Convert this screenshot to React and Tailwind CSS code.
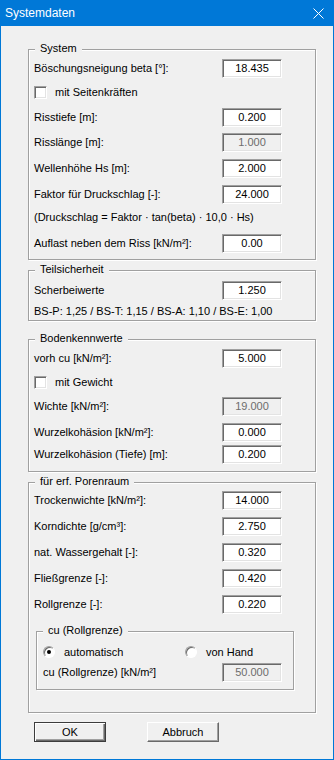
import React from "react";

const sunken =
  "border border-t-[#a0a0a0] border-l-[#a0a0a0] border-r-white border-b-white shadow-[inset_1px_1px_0_#696969,inset_-1px_-1px_0_#e3e3e3]";

function Field({ value, disabled }) {
  return (
    <div
      className={`w-[60px] h-[19px] flex items-center justify-center leading-none ${sunken} ${
        disabled ? "bg-[#f0f0f0] text-[#6d6d6d]" : "bg-white text-black"
      }`}
    >
      {value}
    </div>
  );
}

function Row({ label, value, disabled, className = "" }) {
  return (
    <div className={`flex items-center justify-between h-[19px] ${className}`}>
      <span className="leading-none">{label}</span>
      <Field value={value} disabled={disabled} />
    </div>
  );
}

function Check({ label, className = "" }) {
  return (
    <div className={`flex items-center h-[13px] gap-[8px] ${className}`}>
      <div className={`w-[13px] h-[13px] bg-white ${sunken}`} />
      <span className="leading-none">{label}</span>
    </div>
  );
}

function Radio({ checked }) {
  return (
    <div className="w-[12px] h-[12px] rounded-full border border-t-[#a0a0a0] border-l-[#a0a0a0] border-r-white border-b-white bg-white flex items-center justify-center shadow-[inset_1px_1px_0_#696969]">
      {checked && <div className="w-[4px] h-[4px] rounded-full bg-black" />}
    </div>
  );
}

function Group({ title, className = "", children }) {
  return (
    <div
      className={`relative border border-[#a0a0a0] shadow-[inset_1px_1px_0_#fff,1px_1px_0_#fff] ${className}`}
    >
      <span className="absolute -top-[9px] left-[6px] bg-[#f0f0f0] px-[5px] leading-[14px]">
        {title}
      </span>
      {children}
    </div>
  );
}

function Button({ label, isDefault }) {
  return (
    <div
      className={`w-[72px] h-[20px] flex items-center justify-center leading-none bg-[#f0f0f0] ${
        isDefault
          ? "border border-[#3c3c3c] shadow-[inset_1px_1px_0_#fff,inset_-1px_-1px_0_#696969,inset_-2px_-2px_0_#a0a0a0]"
          : "border border-t-white border-l-white border-r-[#696969] border-b-[#696969] shadow-[inset_-1px_-1px_0_#a0a0a0]"
      }`}
    >
      {label}
    </div>
  );
}

export default function App() {
  return (
    <div className="w-[334px] h-[760px] bg-[#f0f0f0] border border-t-0 border-[#0078d7] flex flex-col font-['Liberation_Sans',Arial,sans-serif] text-[11px] text-black overflow-hidden">
      <div className="h-[26px] shrink-0 bg-[#0078d7] flex items-center justify-between pl-[4px] pr-[9px]">
        <span className="text-white text-[12px] leading-none">Systemdaten</span>
        <svg width="11" height="11" viewBox="0 0 11 11">
          <path d="M0.5 0.5 L10.5 10.5 M10.5 0.5 L0.5 10.5" stroke="#fff" strokeWidth="1" fill="none" />
        </svg>
      </div>

      <div className="pl-[27px] flex flex-col">
        <Group title="System" className="w-[288px] mt-[23px] pl-[5px] pr-[33px] pt-[9px] pb-[6px]">
          <Row label="Böschungsneigung beta [°]:" value="18.435" />
          <Check label="mit Seitenkräften" className="mt-[8px]" />
          <Row label="Risstiefe [m]:" value="0.200" className="mt-[9px]" />
          <Row label="Risslänge [m]:" value="1.000" disabled className="mt-[6px]" />
          <Row label="Wellenhöhe Hs [m]:" value="2.000" className="mt-[7px]" />
          <Row label="Faktor für Druckschlag [-]:" value="24.000" className="mt-[7px]" />
          <div className="h-[14px] mt-[6px] flex items-center leading-none">
            (Druckschlag = Faktor · tan(beta) · 10,0 · Hs)
          </div>
          <Row label="Auflast neben dem Riss [kN/m²]:" value="0.00" className="mt-[10px]" />
        </Group>

        <Group title="Teilsicherheit" className="w-[288px] mt-[10px] pl-[5px] pr-[33px] pt-[10px] pb-[2px]">
          <Row label="Scherbeiwerte" value="1.250" />
          <div className="h-[14px] mt-[4px] flex items-center leading-none">
            BS-P: 1,25 / BS-T: 1,15 / BS-A: 1,10 / BS-E: 1,00
          </div>
        </Group>

        <Group title="Bodenkennwerte" className="w-[288px] mt-[18px] pl-[5px] pr-[33px] pt-[9px] pb-[7px]">
          <Row label="vorh cu [kN/m²]:" value="5.000" />
          <Check label="mit Gewicht" className="mt-[8px]" />
          <Row label="Wichte [kN/m²]:" value="19.000" disabled className="mt-[8px]" />
          <Row label="Wurzelkohäsion [kN/m²]:" value="0.000" className="mt-[7px]" />
          <Row label="Wurzelkohäsion (Tiefe) [m]:" value="0.200" className="mt-[3px]" />
        </Group>

        <Group title="für erf. Porenraum" className="w-[288px] mt-[10px] pl-[5px] pr-[33px] pt-[8px] pb-[22px]">
          <Row label="Trockenwichte [kN/m²]:" value="14.000" />
          <Row label="Korndichte [g/cm³]:" value="2.750" className="mt-[7px]" />
          <Row label="nat. Wassergehalt [-]:" value="0.320" className="mt-[7px]" />
          <Row label="Fließgrenze [-]:" value="0.420" className="mt-[7px]" />
          <Row label="Rollgrenze [-]:" value="0.220" className="mt-[7px]" />

          <Group title="cu (Rollgrenze)" className="w-[258px] ml-[2px] mt-[17px] pl-[6px] pr-[11px] pt-[13px] pb-[7px]">
            <div className="flex items-center h-[14px]">
              <div className="w-[142px] flex items-center gap-[9px]">
                <Radio checked />
                <span className="leading-none">automatisch</span>
              </div>
              <div className="flex items-center gap-[9px]">
                <Radio />
                <span className="leading-none">von Hand</span>
              </div>
            </div>
            <Row label="cu (Rollgrenze) [kN/m²]" value="50.000" disabled className="mt-[4px]" />
          </Group>
        </Group>

        <div className="flex mt-[9px] ml-[6px] gap-[41px]">
          <Button label="OK" isDefault />
          <Button label="Abbruch" />
        </div>
      </div>
    </div>
  );
}
